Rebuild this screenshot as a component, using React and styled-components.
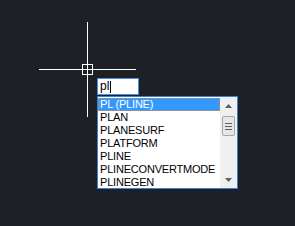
import styled, { createGlobalStyle } from 'styled-components';

const GlobalStyle = createGlobalStyle`
  html, body {
    margin: 0;
    padding: 0;
    background: #1d2025;
  }
  body {
    font-family: "Liberation Sans", Arial, sans-serif;
  }
`;

const Canvas = styled.div`
  position: relative;
  width: 295px;
  height: 226px;
  overflow: hidden;
  background: #1d2025;
`;

const Crosshair = styled.div`
  position: absolute;
  left: ${(p) => p.x}px;
  top: ${(p) => p.y}px;
`;

const HLine = styled.div`
  position: absolute;
  left: -48px;
  top: 0;
  width: 97px;
  height: 1px;
  background: #ffffff;
`;

const VLine = styled.div`
  position: absolute;
  left: 0;
  top: -47px;
  width: 1px;
  height: 95px;
  background: #ffffff;
`;

const PickBox = styled.div`
  position: absolute;
  left: -5px;
  top: -5px;
  width: 9px;
  height: 9px;
  border: 1px solid #ffffff;
`;

const Prompt = styled.div`
  position: absolute;
  left: 97px;
  top: 78px;
  display: flex;
  flex-direction: column;
  align-items: flex-start;
`;

const Input = styled.div`
  width: 38px;
  height: 15px;
  background: #ffffff;
  border: 1px solid #4a8ee6;
  box-sizing: content-box;
  display: flex;
  align-items: center;
  padding: 0 0 0 2px;
  font-size: 12px;
  color: #000;
  line-height: 15px;
`;

const Caret = styled.span`
  display: inline-block;
  width: 1px;
  height: 12px;
  background: #000;
  margin-left: 1px;
`;

const List = styled.div`
  display: flex;
  width: 139px;
  height: 91px;
  margin-top: 1px;
  background: #ffffff;
  border: 1px solid #3c7fd6;
  box-sizing: content-box;
`;

const Items = styled.div`
  flex: 1;
  display: flex;
  flex-direction: column;
  padding-top: 1px;
`;

const Item = styled.div`
  height: 13px;
  line-height: 13px;
  padding-left: 2px;
  font-size: 11px;
  letter-spacing: -0.2px;
  white-space: nowrap;
  color: ${(p) => (p.active ? '#ffffff' : '#000000')};
  background: ${(p) => (p.active ? '#3399ff' : 'transparent')};
  outline: ${(p) => (p.active ? '1px dotted #e08a2c' : 'none')};
  outline-offset: -1px;
`;

const Scrollbar = styled.div`
  width: 17px;
  background: #f0f0f0;
  display: flex;
  flex-direction: column;
  align-items: center;
`;

const Arrow = styled.div`
  height: 17px;
  width: 17px;
  display: flex;
  align-items: center;
  justify-content: center;
`;

const Track = styled.div`
  flex: 1;
  width: 17px;
  display: flex;
  flex-direction: column;
  align-items: center;
`;

const Thumb = styled.div`
  width: 13px;
  height: 20px;
  margin-top: 2px;
  background: #e6e6e6;
  border: 1px solid #a8a8a8;
  border-radius: 2px;
  box-sizing: border-box;
  display: flex;
  flex-direction: column;
  justify-content: center;
  align-items: center;
  gap: 2px;
`;

const Grip = styled.div`
  width: 7px;
  height: 1px;
  background: #606060;
`;

const items = [
  'PL (PLINE)',
  'PLAN',
  'PLANESURF',
  'PLATFORM',
  'PLINE',
  'PLINECONVERTMODE',
  'PLINEGEN',
];

export default function App() {
  return (
    <>
      <GlobalStyle />
      <Canvas>
        <Crosshair x={87} y={69}>
          <HLine />
          <VLine />
          <PickBox />
        </Crosshair>
        <Prompt>
          <Input>
            pl
            <Caret />
          </Input>
          <List>
            <Items>
              {items.map((name, i) => (
                <Item key={name} active={i === 0}>
                  {name}
                </Item>
              ))}
            </Items>
            <Scrollbar>
              <Arrow>
                <svg width="7" height="4" viewBox="0 0 7 4">
                  <path d="M0 4 L3.5 0 L7 4 Z" fill="#606060" />
                </svg>
              </Arrow>
              <Track>
                <Thumb>
                  <Grip />
                  <Grip />
                  <Grip />
                </Thumb>
              </Track>
              <Arrow>
                <svg width="7" height="4" viewBox="0 0 7 4">
                  <path d="M0 0 L3.5 4 L7 0 Z" fill="#606060" />
                </svg>
              </Arrow>
            </Scrollbar>
          </List>
        </Prompt>
      </Canvas>
    </>
  );
}
